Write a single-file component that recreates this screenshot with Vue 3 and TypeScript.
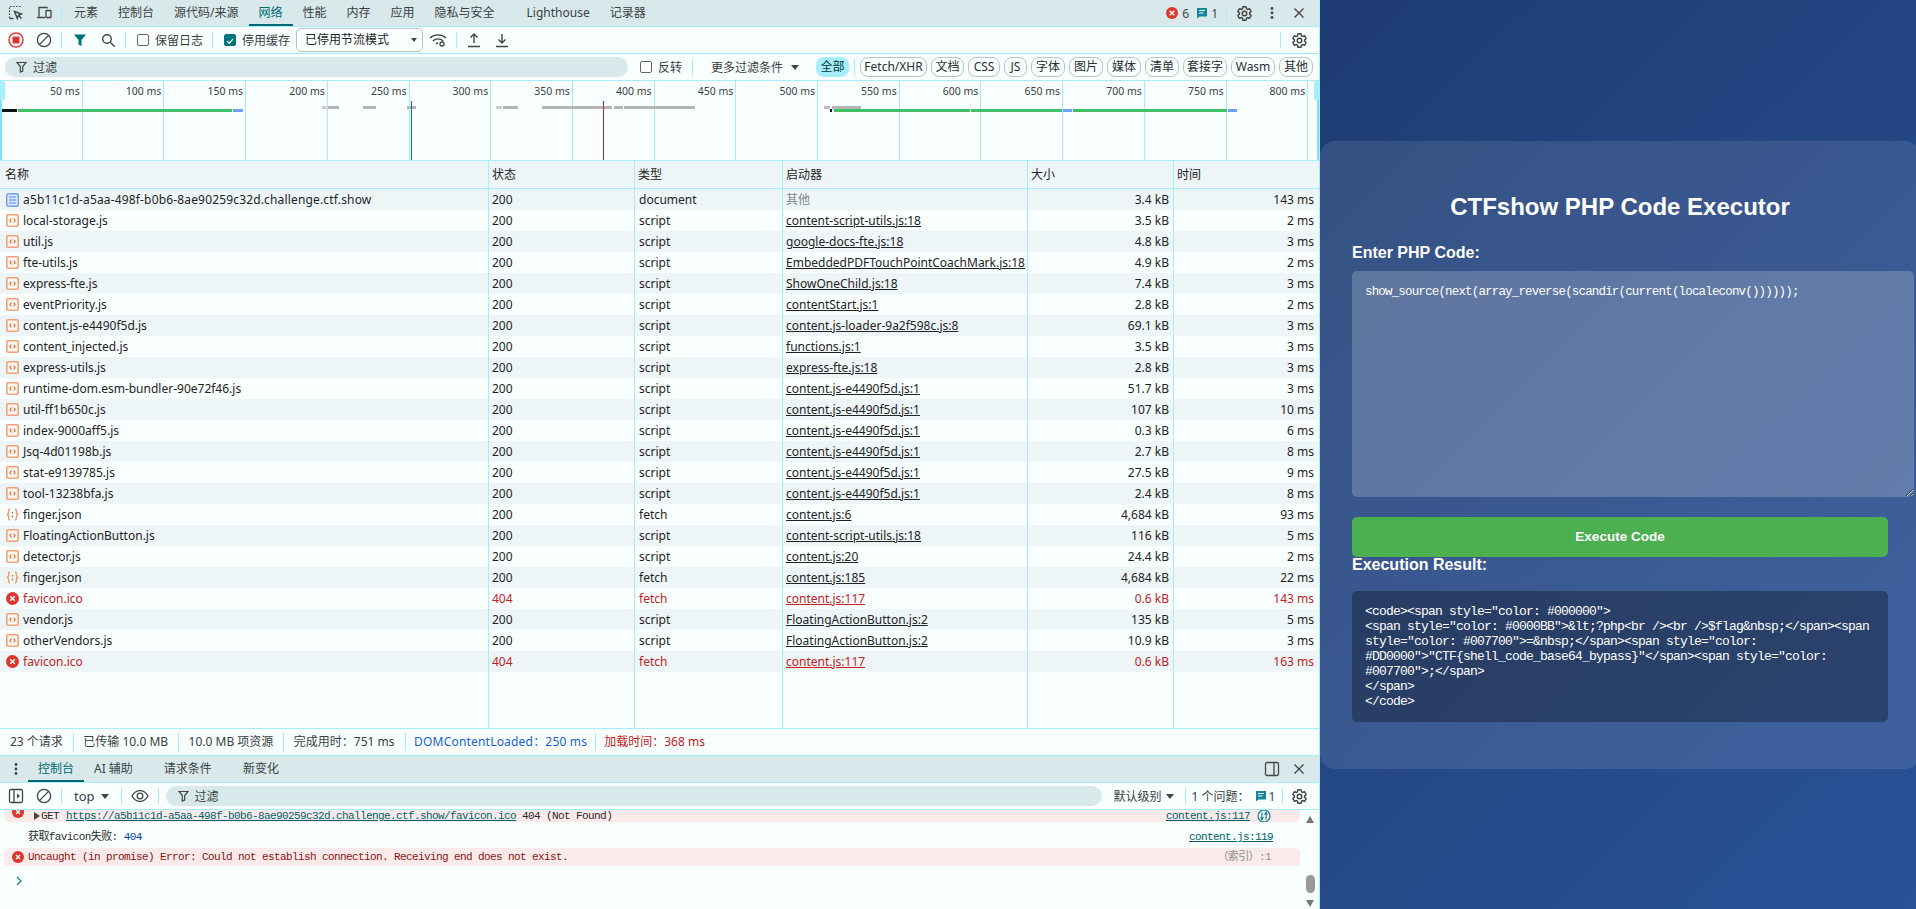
<script setup lang="ts">
interface Row { name: string; status: string; type: string; init: string; size: string; time: string; icon: string }
const raw: string[][] = [
  ['a5b11c1d-a5aa-498f-b0b6-8ae90259c32d.challenge.ctf.show','200','document','其他','3.4 kB','143 ms','doc'],
  ['local-storage.js','200','script','content-script-utils.js:18','3.5 kB','2 ms','js'],
  ['util.js','200','script','google-docs-fte.js:18','4.8 kB','3 ms','js'],
  ['fte-utils.js','200','script','EmbeddedPDFTouchPointCoachMark.js:18','4.9 kB','2 ms','js'],
  ['express-fte.js','200','script','ShowOneChild.js:18','7.4 kB','3 ms','js'],
  ['eventPriority.js','200','script','contentStart.js:1','2.8 kB','2 ms','js'],
  ['content.js-e4490f5d.js','200','script','content.js-loader-9a2f598c.js:8','69.1 kB','3 ms','js'],
  ['content_injected.js','200','script','functions.js:1','3.5 kB','3 ms','js'],
  ['express-utils.js','200','script','express-fte.js:18','2.8 kB','3 ms','js'],
  ['runtime-dom.esm-bundler-90e72f46.js','200','script','content.js-e4490f5d.js:1','51.7 kB','3 ms','js'],
  ['util-ff1b650c.js','200','script','content.js-e4490f5d.js:1','107 kB','10 ms','js'],
  ['index-9000aff5.js','200','script','content.js-e4490f5d.js:1','0.3 kB','6 ms','js'],
  ['Jsq-4d01198b.js','200','script','content.js-e4490f5d.js:1','2.7 kB','8 ms','js'],
  ['stat-e9139785.js','200','script','content.js-e4490f5d.js:1','27.5 kB','9 ms','js'],
  ['tool-13238bfa.js','200','script','content.js-e4490f5d.js:1','2.4 kB','8 ms','js'],
  ['finger.json','200','fetch','content.js:6','4,684 kB','93 ms','json'],
  ['FloatingActionButton.js','200','script','content-script-utils.js:18','116 kB','5 ms','js'],
  ['detector.js','200','script','content.js:20','24.4 kB','2 ms','js'],
  ['finger.json','200','fetch','content.js:185','4,684 kB','22 ms','json'],
  ['favicon.ico','404','fetch','content.js:117','0.6 kB','143 ms','err'],
  ['vendor.js','200','script','FloatingActionButton.js:2','135 kB','5 ms','js'],
  ['otherVendors.js','200','script','FloatingActionButton.js:2','10.9 kB','3 ms','js'],
  ['favicon.ico','404','fetch','content.js:117','0.6 kB','163 ms','err'],
]
const rows: Row[] = raw.map(r => ({ name: r[0], status: r[1], type: r[2], init: r[3], size: r[4], time: r[5], icon: r[6] }))
const tabs = ['元素','控制台','源代码/来源','网络','性能','内存','应用','隐私与安全','Lighthouse','记录器']
const pills: [string, number][] = [['Fetch/XHR',67],['文档',33],['CSS',32],['JS',23],['字体',34],['图片',34],['媒体',34],['清单',34],['套接字',44],['Wasm',44],['其他',34]]
const stats = ['23 个请求','已传输 10.0 MB','10.0 MB 项资源','完成用时：751 ms']
const ticks = [50,100,150,200,250,300,350,400,450,500,550,600,650,700,750,800].map((v, i) => ({ label: v + ' ms', left: 81.7 * (i + 1) }))
const bars = [
  [2,15,110,'#111'],[18,214,110,'#3fbf66'],[233,10,110,'#6ea0f5'],
  [322,5,107,'#ccc'],[328,11,107,'#b5b5b5'],[363,13,107,'#b5b5b5'],[407,9,107,'#b5b5b5'],
  [496,6,107,'#ccc'],[503,15,107,'#b5b5b5'],[542,70,107,'#b5b5b5'],[614,9,107,'#b5b5b5'],[624,71,107,'#b5b5b5'],
  [824,6,107,'#bbb'],[832,29,107,'#b5b5b5'],[830,2,110,'#111'],
  [834,136,110,'#3fbf66'],[971,91,110,'#3fbf66'],[1063,9,110,'#6ea0f5'],[1073,154,110,'#3fbf66'],[1228,9,110,'#6ea0f5'],
].map(b => ({ left: b[0] + 'px', width: b[1] + 'px', top: (b[2] as number) - 82 + 'px', background: b[3] as string }))
const code = 'show_source(next(array_reverse(scandir(current(localeconv())))));'
const result = [
  '<code><span style="color: #000000">',
  '<span style="color: #0000BB">&lt;?php<br /><br />$flag&nbsp;</span><span',
  'style="color: #007700">=&nbsp;</span><span style="color:',
  '#DD0000">"CTF{shell_code_base64_bypass}"</span><span style="color:',
  '#007700">;</span>',
  '</span>',
  '</code>',
].join('\n')
const gear = 'M19.14 12.94c.04-.3.06-.61.06-.94 0-.32-.02-.64-.07-.94l2.03-1.58a.49.49 0 0 0 .12-.61l-1.92-3.32a.488.488 0 0 0-.59-.22l-2.39.96c-.5-.38-1.03-.7-1.62-.94l-.36-2.54a.484.484 0 0 0-.48-.41h-3.84c-.24 0-.43.17-.47.41l-.36 2.54c-.59.24-1.13.57-1.62.94l-2.39-.96c-.22-.08-.47 0-.59.22L2.74 8.87c-.12.21-.08.47.12.61l2.03 1.58c-.05.3-.09.63-.09.94s.02.64.07.94l-2.03 1.58a.49.49 0 0 0-.12.61l1.92 3.32c.12.22.37.29.59.22l2.39-.96c.5.38 1.03.7 1.62.94l.36 2.54c.05.24.24.41.48.41h3.84c.24 0 .44-.17.47-.41l.36-2.54c.59-.24 1.13-.56 1.62-.94l2.39.96c.22.08.47 0 .59-.22l1.92-3.32c.12-.22.07-.47-.12-.61l-2.01-1.58zM12 15.2a3.2 3.2 0 1 1 0-6.4 3.2 3.2 0 0 1 0 6.4z'
</script>

<template>
  <div class="root">
    <div class="devtools">
      <!-- main tab bar -->
      <div class="tabbar">
        <span class="ib"><svg width="16" height="16" viewBox="0 0 16 16" fill="none" stroke="#444" stroke-width="1.2"><path d="M1.5 13V1.5H13" stroke-dasharray="1.6 1.4"/><path d="M1.5 13.5h4M6.5 6.5l7 2.6-3 1.2-1.2 3.2z M10 10l3.5 3.5" stroke-width="1.4"/></svg></span>
        <span class="ib"><svg width="16" height="16" viewBox="0 0 16 16" fill="none" stroke="#444" stroke-width="1.3"><path d="M3 11.5V2.5h8v1M1 12.5h8"/><rect x="10" y="5.5" width="5" height="7" rx=".6"/></svg></span>
        <i class="sep"></i>
        <span v-for="t in tabs" :key="t" class="tab" :class="{ active: t === '网络', lh: t === 'Lighthouse' }">{{ t }}</span>
        <span class="spacer"></span>
        <svg class="noshrink" width="14" height="14" viewBox="0 0 14 14"><circle cx="7" cy="7" r="6" fill="#dc362e"/><path d="M4.7 4.7l4.6 4.6M9.3 4.7l-4.6 4.6" stroke="#fff" stroke-width="1.4"/></svg>
        <span class="cnt">6</span>
        <svg class="msg" width="12" height="12" viewBox="0 0 12 12"><path d="M1 1h10v8.5H3.5L1 11.5z" fill="#12879a"/><path d="M3 3.5h6M3 6h4.5" stroke="#fff" stroke-width="1"/></svg>
        <span class="cnt">1</span>
        <i class="sep rsep"></i>
        <span class="ib"><svg width="17" height="17" viewBox="0 0 24 24" fill="none" stroke="#444" stroke-width="2"><path :d="gear"/></svg></span>
        <span class="ib"><svg width="16" height="16" viewBox="0 0 16 16" fill="#444"><circle cx="8" cy="3.5" r="1.4"/><circle cx="8" cy="8" r="1.4"/><circle cx="8" cy="12.5" r="1.4"/></svg></span>
        <span class="ib close"><svg width="12" height="12" viewBox="0 0 12 12" stroke="#444" stroke-width="1.3"><path d="M1.5 1.5l9 9M10.5 1.5l-9 9"/></svg></span>
      </div>

      <!-- network toolbar -->
      <div class="toolbar">
        <span class="ib"><svg width="16" height="16" viewBox="0 0 16 16"><circle cx="8" cy="8" r="7" fill="none" stroke="#dc362e" stroke-width="1.4"/><rect x="4.5" y="4.5" width="7" height="7" rx="1" fill="#dc362e"/></svg></span>
        <span class="ib"><svg width="16" height="16" viewBox="0 0 16 16" fill="none" stroke="#444" stroke-width="1.3"><circle cx="8" cy="8" r="6.6"/><path d="M3.4 12.6l9.2-9.2"/></svg></span>
        <i class="sep"></i>
        <span class="ib f1"><svg width="14" height="14" viewBox="0 0 14 14"><path d="M1 1.5h12L8.5 7v6l-3-1.500V7z" fill="#00747a"/></svg></span>
        <span class="ib"><svg width="15" height="15" viewBox="0 0 15 15" fill="none" stroke="#444" stroke-width="1.4"><circle cx="6" cy="6" r="4.3"/><path d="M9.2 9.2l4.6 4.6"/></svg></span>
        <i class="sep s2"></i>
        <span class="chk"></span><span class="lbl">保留日志</span>
        <i class="sep s3"></i>
        <span class="chk on"><svg width="12" height="12" viewBox="0 0 12 12"><path d="M2.5 6.2l2.5 2.5 4.5-5" fill="none" stroke="#fff" stroke-width="1.5"/></svg></span><span class="lbl">停用缓存</span>
        <span class="select">已停用节流模式<i class="caret cs"></i></span>
        <span class="ib wifi"><svg width="18" height="16" viewBox="0 0 18 16" fill="none" stroke="#444" stroke-width="1.3"><path d="M1 6c4.5-4.2 11.500-4.200 16 0M3.800 9c3-2.800 7.400-2.800 10.400 0M7 12c.8-.7 1.500-1 2-1"/><circle cx="13" cy="12" r="2"/></svg></span>
        <i class="sep s4"></i>
        <span class="ib up"><svg width="14" height="16" viewBox="0 0 14 16" fill="none" stroke="#444" stroke-width="1.4"><path d="M7 11V2M3.500 5.500L7 2l3.500 3.500M1 14.500h12"/></svg></span>
        <span class="ib"><svg width="14" height="16" viewBox="0 0 14 16" fill="none" stroke="#444" stroke-width="1.4"><path d="M7 2v9M3.500 7.500L7 11l3.500-3.500M1 14.500h12"/></svg></span>
        <span class="spacer"></span>
        <i class="sep"></i>
        <span class="ib lastgear"><svg width="17" height="17" viewBox="0 0 24 24" fill="none" stroke="#444" stroke-width="2"><path :d="gear"/></svg></span>
      </div>

      <!-- filter row -->
      <div class="filterbar">
        <span class="search wide"><svg width="11" height="12" viewBox="0 0 11 12" fill="none" stroke="#444" stroke-width="1.2"><path d="M1 1.500h9L6.700 5.500V10l-2.400 1V5.500z"/></svg><span>过滤</span></span>
        <span class="chk invert"></span><span class="lbl">反转</span>
        <i class="sep s5"></i>
        <span class="more">更多过滤条件<i class="caret"></i></span>
        <span class="allp">全部</span>
        <i class="sep s6"></i>
        <span v-for="p in pills" :key="p[0]" class="pill" :style="{ width: p[1] + 'px' }">{{ p[0] }}</span>
      </div>

      <!-- overview -->
      <div class="overview">
        <div v-for="t in ticks" :key="t.label" class="tick" :style="{ left: t.left + 'px' }"><span>{{ t.label }}</span></div>
        <i v-for="(b, i) in bars" :key="i" class="bar" :style="b"></i>
        <i class="mark blue"></i>
        <i class="mark red"></i>
        <i class="edge left"></i><i class="handle left"></i>
        <i class="edge right"></i><i class="handle right"></i>
      </div>

      <!-- table -->
      <div class="grid head">
        <div>名称</div><div>状态</div><div>类型</div><div>启动器</div><div>大小</div><div class="last">时间</div>
      </div>
      <div class="tbody">
        <div v-for="(r, i) in rows" :key="i" class="grid row" :class="{ alt: i % 2 === 0, err: r.status === '404' }">
          <div class="namecell">
            <svg v-if="r.icon === 'doc'" width="13" height="14" viewBox="0 0 13 14"><rect x=".7" y=".7" width="11.600" height="12.600" rx="1.500" fill="#dbe7fd" stroke="#6f9ef5" stroke-width="1.400"/><path d="M3 4h7M3 7h7M3 10h7" stroke="#4f86ec" stroke-width="1.200"/></svg>
            <svg v-else-if="r.icon === 'js'" width="13" height="13" viewBox="0 0 13 13"><rect x=".8" y=".8" width="11.400" height="11.400" rx="1.200" fill="#fff6f0" stroke="#f0a27a" stroke-width="1.600"/><path d="M5.300 4.700L3.800 6.500l1.500 1.800M7.700 4.700l1.500 1.800-1.500 1.800" fill="none" stroke="#d9703a" stroke-width="1.100"/></svg>
            <svg v-else-if="r.icon === 'json'" width="13" height="13" viewBox="0 0 13 13" fill="none" stroke="#ea9a6c" stroke-width="1.400"><path d="M4 1C2.200 1 2.800 3 2.500 5 2.300 6 1.500 6.500.8 6.500c.7 0 1.500.5 1.700 1.500.3 2-.3 4 1.500 4M9 1c1.800 0 1.200 2 1.500 4 .2 1 1 1.500 1.700 1.500-.7 0-1.500.5-1.700 1.500-.3 2 .3 4-1.500 4"/><path d="M6.500 4v1.500M6.500 7.500v2" stroke="#d9703a"/></svg>
            <svg v-else width="13" height="13" viewBox="0 0 13 13"><circle cx="6.500" cy="6.500" r="6.500" fill="#dc362e"/><path d="M4.200 4.200l4.600 4.600M8.800 4.200l-4.600 4.600" stroke="#fff" stroke-width="1.500"/></svg>
            <span class="nm" :class="{ wider: r.icon === 'doc' }">{{ r.name }}</span>
          </div>
          <div>{{ r.status }}</div>
          <div>{{ r.type }}</div>
          <div class="initc"><span :class="r.init === '其他' ? 'other' : 'link'">{{ r.init }}</span></div>
          <div class="num">{{ r.size }}</div>
          <div class="num last">{{ r.time }}</div>
        </div>
        <div class="grid filler"><div></div><div></div><div></div><div></div><div></div><div class="last"></div></div>
      </div>

      <!-- status -->
      <div class="status">
        <span v-for="s in stats" :key="s">{{ s }}</span>
        <span class="dcl">DOMContentLoaded：250 ms</span>
        <span class="load">加载时间：368 ms</span>
      </div>

      <!-- drawer tabs -->
      <div class="tabbar drawer">
        <span class="ib"><svg width="16" height="16" viewBox="0 0 16 16" fill="#444"><circle cx="8" cy="3.500" r="1.400"/><circle cx="8" cy="8" r="1.400"/><circle cx="8" cy="12.500" r="1.400"/></svg></span>
        <span class="tab active dt1">控制台</span>
        <span class="tab">AI 辅助</span>
        <span class="tab dt3">请求条件</span>
        <span class="tab dt3">新变化</span>
        <span class="spacer"></span>
        <span class="ib"><svg width="16" height="16" viewBox="0 0 16 16" fill="none" stroke="#444" stroke-width="1.300"><rect x="1.500" y="1.500" width="13" height="13" rx="1.500"/><path d="M10 1.500v13"/></svg></span>
        <span class="ib close"><svg width="12" height="12" viewBox="0 0 12 12" stroke="#444" stroke-width="1.300"><path d="M1.500 1.500l9 9M10.500 1.500l-9 9"/></svg></span>
      </div>

      <!-- console toolbar -->
      <div class="toolbar ctool">
        <span class="ib"><svg width="16" height="16" viewBox="0 0 16 16" fill="none" stroke="#444" stroke-width="1.300"><rect x="1.500" y="1.500" width="13" height="13" rx="1.500"/><path d="M6 1.500v13"/><path d="M9 5.500l3 2.500-3 2.500z" fill="#444" stroke="none"/></svg></span>
        <span class="ib"><svg width="16" height="16" viewBox="0 0 16 16" fill="none" stroke="#444" stroke-width="1.300"><circle cx="8" cy="8" r="6.600"/><path d="M3.400 12.600l9.200-9.200"/></svg></span>
        <i class="sep"></i>
        <span class="topsel">top<i class="caret"></i></span>
        <i class="sep s7"></i>
        <span class="ib eye"><svg width="18" height="14" viewBox="0 0 18 14" fill="none" stroke="#444" stroke-width="1.300"><path d="M1 7c2-3.600 5-5.400 8-5.400S15 3.400 17 7c-2 3.600-5 5.400-8 5.400S3 10.600 1 7z"/><circle cx="9" cy="7" r="2.800"/></svg></span>
        <i class="sep s8"></i>
        <span class="search cfilter"><svg width="11" height="12" viewBox="0 0 11 12" fill="none" stroke="#444" stroke-width="1.200"><path d="M1 1.500h9L6.700 5.500V10l-2.400 1V5.500z"/></svg><span>过滤</span></span>
        <span class="level">默认级别<i class="caret"></i></span>
        <i class="sep s9"></i>
        <span class="lbl issues">1 个问题：</span>
        <svg class="msg2" width="12" height="12" viewBox="0 0 12 12"><path d="M1 1h10v8.500H3.500L1 11.500z" fill="#12879a"/><path d="M3 3.500h6M3 6h4.500" stroke="#fff" stroke-width="1"/></svg>
        <span class="lbl one">1</span>
        <i class="sep s10"></i>
        <span class="ib lastgear"><svg width="17" height="17" viewBox="0 0 24 24" fill="none" stroke="#444" stroke-width="2"><path :d="gear"/></svg></span>
      </div>

      <!-- console -->
      <div class="console">
        <div class="msgs">
          <div class="m pink first">
            <svg class="mi" width="12" height="12" viewBox="0 0 12 12"><circle cx="6" cy="6" r="6" fill="#dc362e"/><path d="M4 4l4 4M8 4l-4 4" stroke="#fff" stroke-width="1.300"/></svg>
            <i class="tri"></i>
            <span>GET </span><span class="clink url">https://a5b11c1d-a5aa-498f-b0b6-8ae90259c32d.challenge.ctf.show/favicon.ico</span><span class="nf"> 404 (Not Found)</span>
            <span class="spacer"></span>
            <span class="clink">content.js:117</span>
            <svg class="ai" width="14" height="14" viewBox="0 0 14 14" fill="none" stroke="#12879a" stroke-width="1.200"><circle cx="7" cy="7" r="6"/><path d="M5 3.500v7M3.500 8.500L5 10.500l1.500-2M9 10.500v-7M7.500 5.500L9 3.500l1.500 2"/></svg>
          </div>
          <div class="m second">
            <span class="cn">获取favicon失败: </span><span class="blue404">404</span>
            <span class="spacer"></span>
            <span class="clink r3">content.js:119</span>
          </div>
          <div class="m pink third">
            <svg class="mi" width="12" height="12" viewBox="0 0 12 12"><circle cx="6" cy="6" r="6" fill="#dc362e"/><path d="M4 4l4 4M8 4l-4 4" stroke="#fff" stroke-width="1.300"/></svg>
            <span class="uc">Uncaught (in promise) Error: Could not establish connection. Receiving end does not exist.</span>
            <span class="spacer"></span>
            <span class="idx r2">（索引）:1</span>
          </div>
          <div class="prompt"><svg width="8" height="10" viewBox="0 0 8 10" fill="none" stroke="#12879a" stroke-width="1.300"><path d="M2 1l4 4-4 4"/></svg></div>
        </div>
        <div class="scroll">
          <i class="arr upa"></i>
          <i class="thumb"></i>
          <i class="arr downa"></i>
        </div>
      </div>
    </div>

    <!-- inspected page -->
    <div class="page">
      <div class="card">
        <h1>CTFshow PHP Code Executor</h1>
        <label class="lab">Enter PHP Code:</label>
        <textarea class="ta" readonly :value="code"></textarea>
        <button class="exec">Execute Code</button>
        <h3>Execution Result:</h3>
        <pre class="res">{{ result }}</pre>
      </div>
    </div>
  </div>
</template>

<style>
html, body { margin: 0; padding: 0; overflow: hidden; }
</style>

<style scoped>
.root { display: flex; width: 1916px; height: 909px; overflow: hidden; font: 12px "Noto Sans", "Noto Sans CJK SC", sans-serif; color: #1f2325; }
.devtools { width: 1320px; flex: none; display: flex; flex-direction: column; background: #f9feff; border-right: 1px solid #a6eefb; box-sizing: border-box; height: 909px; }
.spacer { flex: 1; }
.noshrink { flex: none; }
.ib { width: 28px; height: 26px; display: flex; align-items: center; justify-content: center; flex: none; }
.tabbar .ib:first-child, .toolbar .ib:first-child { margin-left: 2px; }
.sep { display: block; width: 1px; height: 16px; background: #a6eefb; flex: none; margin: 0 2px 0 3px; }
.tabbar { height: 27px; flex: none; box-sizing: border-box; display: flex; align-items: center; background: #d9e9eb; border-bottom: 1px solid #a6eefb; }
.tab { height: 26px; line-height: 26px; padding: 0 10px; color: #3a3f42; box-sizing: border-box; flex: none; }
.tab.active { color: #00686e; border-bottom: 2px solid #00686e; }
.tab.lh { margin-left: 12px; }
.cnt { margin-left: 3px; color: #444; }
.msg { margin-left: 7px; flex: none; }
.rsep { margin: 0 3px 0 8px; }
.close { margin-left: -1px; margin-right: 6px; }
.toolbar { height: 27px; flex: none; box-sizing: border-box; display: flex; align-items: center; border-bottom: 1px solid #a6eefb; }
.f1 { margin-left: 2px; }
.s2 { margin-left: 3px; }
.chk { width: 12px; height: 12px; border: 1px solid #666; border-radius: 2px; flex: none; box-sizing: border-box; margin-left: 9px; display: flex; background: #fff; }
.chk.on { background: #00747a; border-color: #00747a; margin-left: 11px; }
.lbl { margin-left: 6px; flex: none; color: #3a3f42; }
.s3 { margin: 0 0 0 9px; }
.select { width: 127px; height: 24px; box-sizing: border-box; margin-left: 6px; border: 1px solid #b6c4c8; border-radius: 5px; padding-left: 8px; line-height: 22px; position: relative; flex: none; color: #1f2325; }
.caret { display: inline-block; width: 0; height: 0; border-left: 4px solid transparent; border-right: 4px solid transparent; border-top: 5px solid #444; margin-left: 7px; vertical-align: 2px; }
.cs { position: absolute; right: 5px; top: 9px; margin: 0; border-left-width: 3.500px; border-right-width: 3.500px; border-top-width: 4px; }
.wifi { margin-left: 1px; }
.s4 { margin: 0 0 0 4px; }
.up { margin-left: 3px; }
.lastgear { margin-right: 6px; margin-left: 2px; }
.filterbar { height: 27px; flex: none; box-sizing: border-box; display: flex; align-items: center; border-bottom: 1px solid #a6eefb; padding-left: 5px; }
.search { height: 20px; border-radius: 10px; background: #d9e9eb; display: flex; align-items: center; gap: 6px; padding-left: 11px; box-sizing: border-box; flex: none; color: #3a3f42; }
.wide { width: 623px; }
.invert { margin-left: 12px; }
.s5 { margin: 0 0 0 10px; }
.more { margin-left: 18px; flex: none; color: #3a3f42; }
.more .caret { margin-left: 8px; }
.allp { width: 33px; height: 20px; line-height: 20px; text-align: center; border-radius: 8px; background: #a6eefb; margin-left: 17px; flex: none; color: #00383c; }
.s6 { margin: 0 5px 0 5px; }
.pill { height: 20px; line-height: 18px; text-align: center; white-space: nowrap; border: 1px solid #bcc6c8; border-radius: 8px; box-sizing: border-box; margin-right: 4px; flex: none; color: #2b2f31; background: #f9feff; }
.overview { height: 80px; flex: none; position: relative; box-sizing: border-box; border-bottom: 1px solid #a6eefb; overflow: hidden; }
.tick { position: absolute; top: 0; height: 80px; width: 1px; background: #a6eefb; }
.tick span { position: absolute; right: 3px; top: 2px; white-space: nowrap; font-size: 10.500px; line-height: 16px; color: #3a3f42; }
.bar { position: absolute; height: 3px; display: block; }
.mark { position: absolute; top: 20px; height: 60px; display: block; }
.mark.blue { left: 410.500px; width: 1.500px; background: #1a5fd6; }
.mark.red { left: 603px; width: 1px; background: #b3261e; }
.edge { position: absolute; top: 18px; bottom: 0; width: 2px; background: #7fe3f7; display: block; }
.edge.left { left: 0; }
.edge.right { right: 0; }
.handle { position: absolute; top: 0; width: 5px; height: 19px; background: #a6eefb; border-radius: 0 2px 2px 0; display: block; }
.handle.left { left: 0; }
.handle.right { right: 0; border-radius: 2px 0 0 2px; }
.grid { display: grid; grid-template-columns: 489px 146px 148px 245px 146px 145px; }
.grid > div { border-right: 1px solid #a6eefb; box-sizing: border-box; white-space: nowrap; overflow: hidden; }
.grid > .last { border-right: none; }
.head { height: 28px; flex: none; background: #edf5f7; border-bottom: 1px solid #a6eefb; box-sizing: border-box; }
.head > div { line-height: 27px; padding-left: 3px; }
.head > div:first-child { padding-left: 5px; }
.tbody { flex: 1; display: flex; flex-direction: column; min-height: 0; }
.row { height: 21px; flex: none; }
.row > div { line-height: 21px; padding-left: 3px; }
.row > div:nth-child(3) { padding-left: 4px; }
.row.alt { background: #edf5f7; }
.row.err { color: #c5221f; }
.row > .namecell { display: flex; align-items: center; padding-left: 4px; }
.namecell svg { flex: none; margin-left: 2px; }
.nm { margin-left: 4px; }
.wider { letter-spacing: .16px; }
.link { text-decoration: underline; }
.other { color: #80868a; }
.row .num { text-align: right; padding-right: 4px; padding-left: 0; }
.row .last { padding-right: 5px; }
.filler { flex: 1; }
.status { height: 28px; flex: none; box-sizing: border-box; display: flex; align-items: center; border-top: 1px solid #a6eefb; border-bottom: 1px solid #a6eefb; padding-left: 10px; color: #3a3f42; }
.status span { padding-right: 10px; margin-right: 9.500px; border-right: 1px solid #a6eefb; line-height: 18px; flex: none; }
.status .dcl { color: #1a5fd6; letter-spacing: .2px; padding-right: 8px; margin-right: 8px; margin-left: -1px; }
.status .load { color: #c5221f; border-right: none; }
.drawer .dt1 { margin-left: -2px; width: 56px; padding: 0 0 0 10px; }
.dt3 { margin-left: 11px; }
.topsel { margin-left: 10px; flex: none; color: #3a3f42; font-size: 13px; }
.topsel .caret { margin-left: 6px; }
.s7 { margin: 0 0 0 12px; }
.eye { margin-left: 4px; }
.s8 { margin: 0 7px 0 4px; }
.cfilter { width: 936px; padding-left: 12px; }
.level { margin-left: 12px; flex: none; color: #3a3f42; }
.level .caret { margin-left: 4px; }
.s9 { margin: 0 0 0 11px; }
.issues { margin-right: 5px; }
.one { margin-left: 2px; }
.msg2 { flex: none; }
.s10 { margin: 0 0 0 7px; }
.console { flex: none; height: 99px; display: flex; overflow: hidden; font: 11px/12px "Liberation Mono", "Noto Sans CJK SC", monospace; letter-spacing: -0.6px; color: #2b2b2b; }
.msgs { flex: 1; min-width: 0; padding: 0 0 0 4px; display: flex; flex-direction: column; }
.m { display: flex; align-items: center; padding-left: 8px; white-space: pre; flex: none; box-sizing: border-box; overflow: hidden; }
.pink { background: #fbeaea; border-radius: 5px; }
.first { height: 12px; border-radius: 0 0 5px 5px; align-items: flex-start; }
.first > .mi { margin-top: -4px; }
.second { height: 26px; padding-left: 24px; padding-top: 4px; }
.third { height: 18px; padding-left: 8px; }
.mi { flex: none; margin-right: 4px; }
.first .mi { margin-right: 10px; }
.tri { width: 0; height: 0; border-top: 4px solid transparent; border-bottom: 4px solid transparent; border-left: 6px solid #444; margin: 2px 1px 0 0; flex: none; }
.clink { color: #00626a; text-decoration: underline; flex: none; }
.url { margin-left: 1px; }
.ai { flex: none; margin: -1px 29px 0 7px; }
.r2 { margin-right: 29px; }
.r3 { margin-right: 27px; }
.blue404 { color: #0b3e9c; }
.uc { color: #8a1414; }
.idx { color: #8a8f92; }
.prompt { padding: 10px 0 0 11px; line-height: 12px; }
.scroll { width: 19px; flex: none; position: relative; }
.arr { position: absolute; left: 6px; width: 0; height: 0; border-left: 4.500px solid transparent; border-right: 4.500px solid transparent; display: block; }
.upa { top: 6px; border-bottom: 7px solid #777; }
.downa { top: 90px; border-top: 7px solid #777; }
.thumb { position: absolute; left: 6px; top: 65px; width: 9px; height: 18px; border-radius: 5px; background: #999; display: block; }
.page { flex: 1; min-width: 0; display: flex; align-items: center; background: linear-gradient(135deg, #1e3c72, #2a5298); height: 909px; overflow: hidden; font-family: "Liberation Sans", Arial, sans-serif; color: #fff; }
.card { width: 600px; flex: none; box-sizing: border-box; height: 628px; padding: 32px; background: rgba(255,255,255,.1); border-radius: 15px; }
h1 { margin: 20px 0 23px; font-size: 24px; line-height: 28px; font-weight: 700; text-align: center; color: #fff; }
.lab { display: block; font-size: 16px; font-weight: 700; line-height: 18px; margin-bottom: 9px; }
.ta { display: block; width: 536px; box-sizing: content-box; padding: 13px; height: 200px; border: none; border-radius: 5px; background: rgba(255,255,255,.2); color: #fff; font: 12.500px/16px "Liberation Mono", monospace; letter-spacing: -0.83px; outline: none; }
.exec { display: block; width: 536px; height: 40px; margin-top: 20px; border: none; border-radius: 5px; background: #4caf50; color: #fff; font: 700 13.500px "Liberation Sans", Arial, sans-serif; padding: 0; }
h3 { margin: 0 0 18px; font-size: 16px; line-height: 16px; font-weight: 700; }
.res { margin: 0; padding: 13px; height: 131px; box-sizing: border-box; border-radius: 5px; background: rgba(0,0,0,.3); color: #fff; font: 13px/15px "Liberation Mono", monospace; letter-spacing: -0.8px; white-space: pre; overflow: hidden; }
</style>
